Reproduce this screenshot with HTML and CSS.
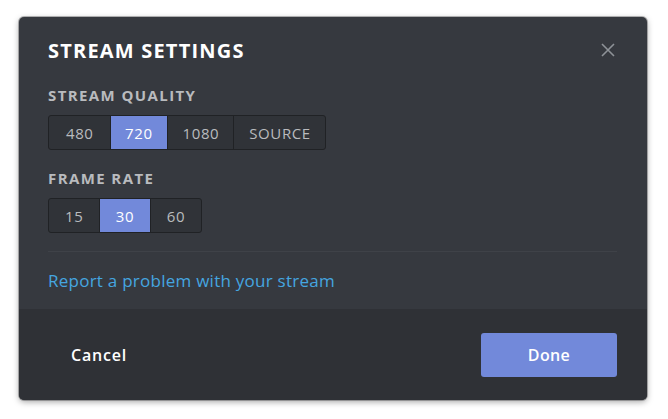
FILE: index.html
```html
<!DOCTYPE html>
<html>
<head>
<meta charset="utf-8">
<link rel="stylesheet" href="styles.css">
</head>
<body>
<div class="stage">
  <div class="modal">
    <div class="header">
      <h2 class="title">STREAM SETTINGS</h2>
      <button class="close" aria-label="Close">
        <svg width="14" height="14" viewBox="0 0 14 14"><path d="M1 1 L13 13 M13 1 L1 13" stroke="#8e9297" stroke-width="1.6" fill="none"/></svg>
      </button>
    </div>
    <div class="content">
      <div class="label label-first">STREAM QUALITY</div>
      <div class="seg">
        <div class="opt wide">480</div>
        <div class="opt on">720</div>
        <div class="opt">1080</div>
        <div class="opt">SOURCE</div>
      </div>
      <div class="label">FRAME RATE</div>
      <div class="seg">
        <div class="opt mid">15</div>
        <div class="opt on mid">30</div>
        <div class="opt mid">60</div>
      </div>
      <div class="divider"></div>
      <a class="link" href="#">Report a problem with your stream</a>
    </div>
    <div class="footer">
      <button class="cancel">Cancel</button>
      <button class="done">Done</button>
    </div>
  </div>
</div>
</body>
</html>
```

FILE: styles.css
```css
* { box-sizing: border-box; }
html, body { margin: 0; padding: 0; background: #ffffff; }
body { font-family: "Open Sans", "Liberation Sans", sans-serif; }
.stage { padding: 17px 21px 19px 19px; display: flex; }
.modal {
  width: 628px;
  height: 383px;
  background: #36393f;
  border-radius: 5px;
  overflow: hidden;
  display: flex;
  flex-direction: column;
  box-shadow: 0 0 0 1px rgba(32,34,37,0.3), 0 2px 6px rgba(0,0,0,0.35);
}
.header {
  display: flex;
  justify-content: space-between;
  align-items: flex-start;
  padding: 22px 30px 0 29px;
}
.title {
  margin: 0;
  font-size: 20px;
  line-height: 24px;
  font-weight: 700;
  color: #ffffff;
  letter-spacing: 1.2px;
}
.close {
  background: none;
  border: 0;
  padding: 0;
  margin: 4px 2px 0 0;
  width: 14px;
  height: 14px;
  display: flex;
}
.content {
  flex: 1;
  padding: 0 30px 0 29px;
  display: flex;
  flex-direction: column;
  align-items: flex-start;
}
.label {
  font-size: 15px;
  line-height: 18px;
  font-weight: 700;
  color: #b9bbbe;
  letter-spacing: 1.4px;
  margin-top: 19px;
  margin-bottom: 11px;
}
.label-first { margin-top: 23px; }
.seg {
  display: flex;
  height: 35px;
  border: 1px solid #202225;
  border-radius: 3px;
  overflow: hidden;
  background: #303338;
}
.opt {
  display: flex;
  align-items: center;
  padding: 0 14px 0 15px;
  font-size: 15px;
  color: #b9bbbe;
  letter-spacing: 0.6px;
  border-left: 1px solid #202225;
}
.opt:first-child { border-left: 0; }
.opt.on { background: #7289da; color: #ffffff; padding: 0 14px; }
.opt.wide { padding: 0 16.5px 0 17px; }
.opt.mid { padding: 0 15.5px 0 16px; }
.divider {
  align-self: stretch;
  height: 1px;
  background: #3f4248;
  margin-top: 18px;
}
.link {
  margin-top: 18px;
  font-size: 17px;
  line-height: 21px;
  color: #45a6e0;
  text-decoration: none;
  letter-spacing: 0.25px;
}
.footer {
  height: 91px;
  background: #2f3136;
  display: flex;
  align-items: center;
  justify-content: space-between;
  padding: 0 30px 0 29px;
}
.cancel {
  background: none;
  border: 0;
  font-family: inherit;
  font-size: 16px;
  font-weight: 600;
  color: #ffffff;
  padding: 0 23px;
  height: 44px;
  letter-spacing: 0.8px;
}
.done {
  width: 136px;
  height: 44px;
  background: #7289da;
  border: 0;
  border-radius: 3px;
  font-family: inherit;
  font-size: 16px;
  font-weight: 600;
  color: #ffffff;
  letter-spacing: 0.4px;
}
```
